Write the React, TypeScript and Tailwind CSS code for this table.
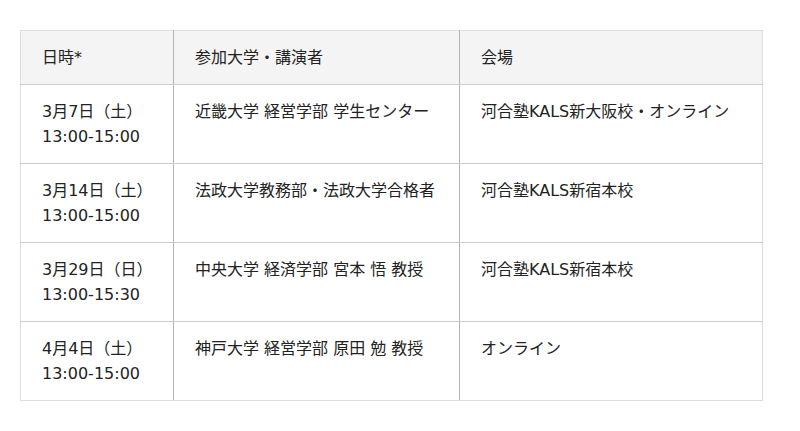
const rows = [
  { date: "3月7日（土）", time: "13:00-15:00", who: "近畿大学 経営学部 学生センター", place: "河合塾KALS新大阪校・オンライン" },
  { date: "3月14日（土）", time: "13:00-15:00", who: "法政大学教務部・法政大学合格者", place: "河合塾KALS新宿本校" },
  { date: "3月29日（日）", time: "13:00-15:30", who: "中央大学 経済学部 宮本 悟 教授", place: "河合塾KALS新宿本校" },
  { date: "4月4日（土）", time: "13:00-15:00", who: "神戸大学 経営学部 原田 勉 教授", place: "オンライン" },
];

// inner vertical lines are darker than the outer frame
const cell =
  "border border-t-[#cccccc] border-b-[#cccccc] border-l-[#b4b4b4] border-r-[#b4b4b4] first:border-l-[#dddddd] last:border-r-[#dddddd] pl-[21px] pr-[12px] py-[14px] text-left align-top font-normal whitespace-nowrap";

export default function App() {
  return (
    <div className="w-[800px] h-[431px] bg-white pt-[30px] px-[20px] text-[#222] text-[16px] leading-[25px] [font-family:DejaVu_Sans,Noto_Sans_CJK_JP,sans-serif]">
      <table className="w-[742px] border-collapse table-fixed">
        <colgroup>
          <col className="w-[153px]" />
          <col className="w-[286px]" />
          <col className="w-[303px]" />
        </colgroup>
        <thead>
          <tr className="bg-[#f4f4f4]">
            <th className={cell + " border-t-[#dddddd]"}>日時*</th>
            <th className={cell + " border-t-[#dddddd]"}>参加大学・講演者</th>
            <th className={cell + " border-t-[#dddddd]"}>会場</th>
          </tr>
        </thead>
        <tbody>
          {rows.map((r, i) => {
            const c = i === rows.length - 1 ? cell + " border-b-[#dddddd]" : cell;
            return (
              <tr key={r.date}>
                <td className={c}>
                  {r.date}
                  <br />
                  {r.time}
                </td>
                <td className={c}>{r.who}</td>
                <td className={c}>{r.place}</td>
              </tr>
            );
          })}
        </tbody>
      </table>
    </div>
  );
}
